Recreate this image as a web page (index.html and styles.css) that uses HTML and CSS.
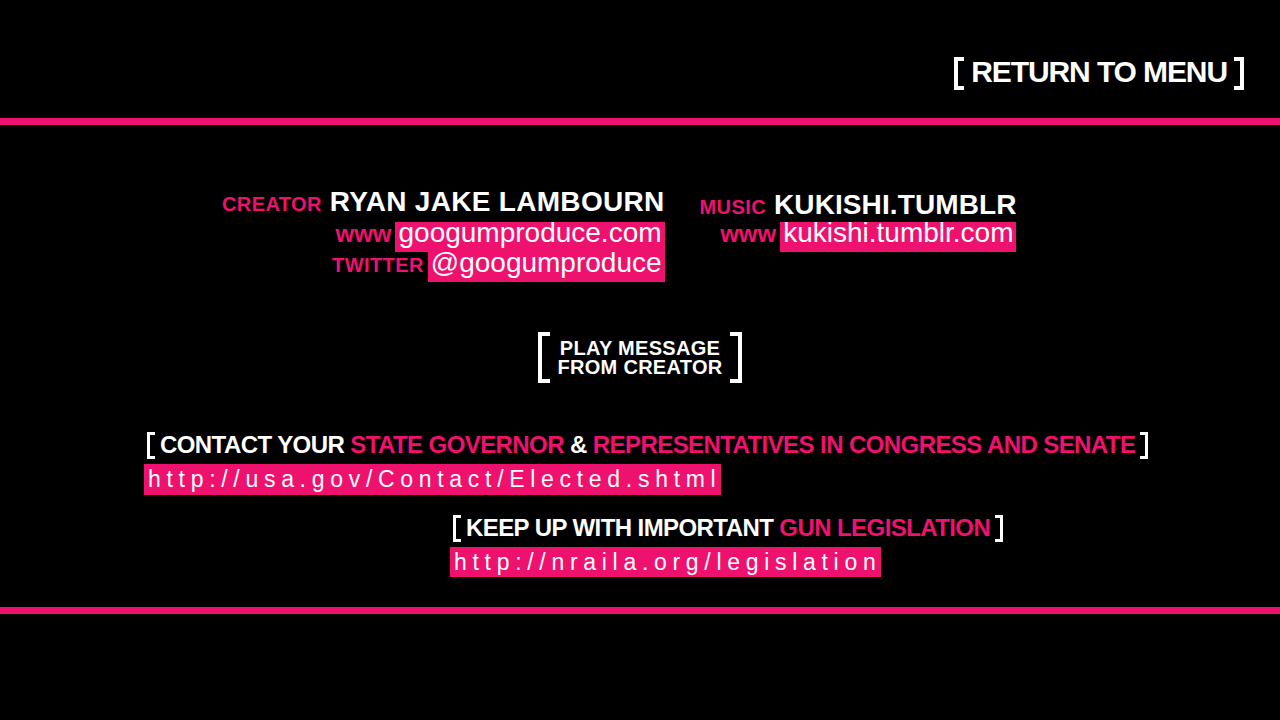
FILE: index.html
```html
<!DOCTYPE html>
<html lang="en">
<head>
  <meta charset="UTF-8">
  <title>Credits</title>
  <link rel="stylesheet" href="styles.css">
</head>
<body>
  <div class="topbar">
    <a class="menu-link" href="#">
      <span class="br br-l br-big"></span>
      <span class="menu-text">RETURN TO MENU</span>
      <span class="br br-r br-big"></span>
    </a>
  </div>
  <div class="rule"></div>

  <div class="content">
    <div class="credits">
      <div class="col">
        <div class="row row-head">
          <span class="label">CREATOR</span>
          <span class="name">RYAN JAKE LAMBOURN</span>
        </div>
        <div class="row">
          <span class="label label-www">www</span>
          <span class="tag">googumproduce.com</span>
        </div>
        <div class="row">
          <span class="label">TWITTER</span>
          <span class="tag">@googumproduce</span>
        </div>
      </div>

      <div class="col col-music">
        <div class="row row-head">
          <span class="label">MUSIC</span>
          <span class="name">KUKISHI.TUMBLR</span>
        </div>
        <div class="row">
          <span class="label label-www">www</span>
          <span class="tag">kukishi.tumblr.com</span>
        </div>
      </div>
    </div>

    <a class="play" href="#">
      <span class="br br-l br-play"></span>
      <span class="play-text">PLAY MESSAGE<br>FROM CREATOR</span>
      <span class="br br-r br-play"></span>
    </a>

    <div class="links">
      <div class="link-block">
        <div class="link-head">
          <span class="br br-l"></span>
          <span>CONTACT YOUR <em>STATE GOVERNOR</em> &amp; <em>REPRESENTATIVES IN CONGRESS AND SENATE</em></span>
          <span class="br br-r"></span>
        </div>
        <div class="url url-first">http://usa.gov/Contact/Elected.shtml</div>
      </div>

      <div class="link-block link-block-second">
        <div class="link-head">
          <span class="br br-l"></span>
          <span>KEEP UP WITH IMPORTANT <em>GUN LEGISLATION</em></span>
          <span class="br br-r"></span>
        </div>
        <div class="url">http://nraila.org/legislation</div>
      </div>
    </div>
  </div>
  <div class="rule"></div>
</body>
</html>
```

FILE: styles.css
```css
body {
  margin: 0;
  background-color: #000;
  font-family: 'Liberation Sans', Arial, sans-serif;
  color: #fff;
}

a {
  color: #fff;
  text-decoration: none;
}

em {
  font-style: normal;
  color: #ef116e;
}

.rule {
  height: 7px;
  background-color: #ef116e;
}

/* top bar */
.topbar {
  height: 118px;
  box-sizing: border-box;
  padding: 57px 36px 0 0;
  display: flex;
  justify-content: flex-end;
  align-items: flex-start;
}

.menu-link {
  display: flex;
  align-items: flex-start;
  gap: 7px;
}

.menu-text {
  font-size: 30px;
  font-weight: bold;
  letter-spacing: -1.1px;
  line-height: 30px;
}

/* square brackets drawn from borders */
.br {
  display: inline-block;
  box-sizing: border-box;
  width: 8px;
  height: 27px;
  border: 3px solid #fff;
  flex-shrink: 0;
}

.br-l {
  border-right: 0;
}

.br-r {
  border-left: 0;
}

.br-big {
  width: 10px;
  height: 33px;
  border-width: 4px;
}

.br-big.br-l { border-right: 0; }
.br-big.br-r { border-left: 0; }

.br-play {
  width: 12px;
  height: 51px;
  border-width: 4px;
}

.br-play.br-l { border-right: 0; }
.br-play.br-r { border-left: 0; }

.content {
  height: 482px;
}

/* credits */
.credits {
  display: flex;
  gap: 35px;
  padding: 62px 0 0 222px;
}

.col {
  display: flex;
  flex-direction: column;
  align-items: flex-end;
}

.row {
  display: flex;
  align-items: baseline;
  gap: 4px;
}

.row-head {
  gap: 8px;
  height: 30px;
  line-height: 30px;
  margin-bottom: 5px;
}

.col-music .row-head {
  padding-top: 3px;
  margin-bottom: 2px;
}

.label {
  color: #ef116e;
  font-size: 20px;
  font-weight: bold;
  letter-spacing: 0.4px;
  line-height: 20px;
}

.label-www {
  font-size: 24px;
  letter-spacing: 0;
}

.name {
  font-size: 28px;
  font-weight: bold;
  letter-spacing: 0.3px;
}

.col-music .name {
  letter-spacing: 0.1px;
}

.tag {
  display: inline-block;
  background-color: #ef116e;
  font-size: 28px;
  line-height: 22px;
  padding: 0 3px 8px;
}

/* play button */
.play {
  display: flex;
  justify-content: center;
  align-items: center;
  gap: 7px;
  margin-top: 50px;
}

.play-text {
  font-size: 20px;
  font-weight: bold;
  letter-spacing: 0.3px;
  line-height: 19px;
  text-align: center;
}

/* links */
.links {
  padding-left: 144px;
  margin-top: 47px;
}

.link-block {
  display: flex;
  flex-direction: column;
  align-items: flex-start;
}

.link-block-second {
  margin: 18px 0 0 306px;
}

.link-head {
  display: flex;
  align-items: center;
  gap: 5px;
  padding-left: 3px;
  font-size: 24px;
  font-weight: bold;
  letter-spacing: -0.58px;
  line-height: 30px;
}

.url {
  margin-top: 4px;
  background-color: #ef116e;
  font-size: 23px;
  letter-spacing: 5.7px;
  line-height: 30px;
  padding-left: 4px;
}

.url-first {
  line-height: 31px;
}
```
